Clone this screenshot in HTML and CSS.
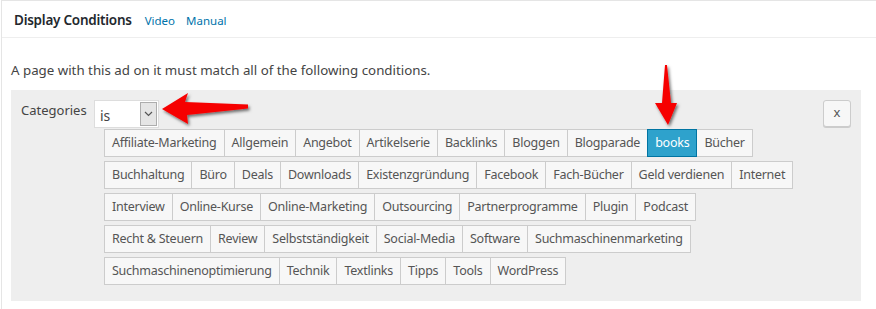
FILE: index.html
```html
<!doctype html>
<html>
<head>
<meta charset="utf-8">
<title>Display Conditions</title>
<link rel="stylesheet" href="styles.css">
</head>
<body>
<div class="postbox">
  <div class="hndle">
    <h2>Display Conditions</h2>
    <a href="#">Video</a>
    <a href="#">Manual</a>
  </div>
  <div class="inside">
    <p class="intro">A page with this ad on it must match all of the following conditions.</p>
    <div class="condition">
      <div class="label">Categories</div>
      <div class="values">
        <div class="select">
          <span>is</span>
          <span class="caret">
            <svg width="9" height="6" viewBox="0 0 9 6"><path d="M1 1l3.5 3.5L8 1" fill="none" stroke="#555" stroke-width="1.2"/></svg>
          </span>
        </div>
        <div class="tags">
          <div class="row">
            <span class="tag">Affiliate-Marketing</span><span class="tag">Allgemein</span><span class="tag">Angebot</span><span class="tag">Artikelserie</span><span class="tag">Backlinks</span><span class="tag">Bloggen</span><span class="tag">Blogparade</span><span class="tag active">books</span><span class="tag">Bücher</span>
          </div>
          <div class="row">
            <span class="tag">Buchhaltung</span><span class="tag">Büro</span><span class="tag">Deals</span><span class="tag">Downloads</span><span class="tag">Existenzgründung</span><span class="tag">Facebook</span><span class="tag">Fach-Bücher</span><span class="tag">Geld verdienen</span><span class="tag">Internet</span>
          </div>
          <div class="row">
            <span class="tag">Interview</span><span class="tag">Online-Kurse</span><span class="tag">Online-Marketing</span><span class="tag">Outsourcing</span><span class="tag">Partnerprogramme</span><span class="tag">Plugin</span><span class="tag">Podcast</span>
          </div>
          <div class="row">
            <span class="tag">Recht &amp; Steuern</span><span class="tag">Review</span><span class="tag">Selbstständigkeit</span><span class="tag">Social-Media</span><span class="tag">Software</span><span class="tag">Suchmaschinenmarketing</span>
          </div>
          <div class="row">
            <span class="tag">Suchmaschinenoptimierung</span><span class="tag">Technik</span><span class="tag">Textlinks</span><span class="tag">Tipps</span><span class="tag">Tools</span><span class="tag">WordPress</span>
          </div>
        </div>
      </div>
      <button class="remove">x</button>
    </div>
  </div>
</div>

<!-- annotation arrows over the screenshot -->
<svg class="arrows" width="876" height="309" viewBox="0 0 876 309">
  <defs>
    <filter id="shadow" x="-20%" y="-20%" width="150%" height="150%">
      <feDropShadow dx="1.5" dy="2" stdDeviation="1.5" flood-color="#000" flood-opacity="0.55"/>
    </filter>
  </defs>
  <g fill="#f60000" filter="url(#shadow)">
    <polygon points="162,109 188,93 185,102 248,104.5 248,108.5 187,115 188,124"/>
    <polygon points="665,65 667,65 671,103 677,103 668,125 655,103 662,103"/>
  </g>
</svg>
</body>
</html>
```

FILE: styles.css
```css
html, body {
  margin: 0;
  padding: 0;
}
body {
  position: relative;
  overflow: hidden;
  background: #fff;
  font-family: "Noto Sans", "Open Sans", Arial, sans-serif;
  font-size: 13px;
  color: #444;
}
.postbox {
  margin: 0 -10px 0 1px;
  border: 1px solid #e5e5e5;
  border-bottom: 0;
  min-height: 308px;
}
.hndle {
  display: flex;
  align-items: baseline;
  gap: 11px;
  height: 36px;
  padding: 0 12px;
  border-bottom: 1px solid #eee;
}
.hndle h2 {
  margin: 0;
  padding-top: 10px;
  font-size: 13.5px;
  font-weight: 600;
  letter-spacing: -0.25px;
  color: #23282d;
}
.hndle a {
  font-size: 11.5px;
  color: #0073aa;
  text-decoration: none;
}
.hndle h2 + a {
  margin-left: 2px;
}
.inside {
  padding: 0 24px 0 9px;
}
.intro {
  margin: 0;
  padding: 22px 0 10px;
  line-height: 20px;
  font-size: 13.3px;
}
.condition {
  display: flex;
  align-items: flex-start;
  background: #eee;
  padding: 10px 10px 12px 10px;
}
.label {
  flex-shrink: 0;
  width: 73px;
  padding-top: 1px;
  color: #444;
}
.values {
  flex: 1;
}
.select {
  display: flex;
  justify-content: space-between;
  width: 63px;
  height: 26px;
  border: 1px solid #ddd;
  background: #fff;
  font-size: 14px;
}
.select span:first-child {
  padding: 5px 0 0 5px;
}
.caret {
  display: flex;
  align-items: center;
  justify-content: center;
  width: 15px;
  margin: 1px 1px 1px 0;
  background: #e5e5e5;
  border: 1px solid #adadad;
}
.tags {
  padding-left: 10px;
  margin-top: 1px;
}
.row {
  display: flex;
  margin-bottom: 4px;
}
.tag {
  display: block;
  height: 26px;
  line-height: 26px;
  padding: 0 7px;
  border: 1px solid #ccc;
  background: #f7f7f7;
  color: #555;
  font-size: 12.5px;
  letter-spacing: -0.25px;
  white-space: nowrap;
}
.tag + .tag {
  margin-left: -1px;
}
.tag.active {
  background: #2ea2cc;
  border-color: #0074a2;
  color: #fff;
  position: relative;
}
.remove {
  flex-shrink: 0;
  width: 28px;
  height: 27px;
  padding: 0 0 3px;
  border: 1px solid #ccc;
  border-radius: 3px;
  background: #f7f7f7;
  box-shadow: 0 1px 0 #ccc;
  font-family: inherit;
  font-size: 13px;
  color: #555;
}
.arrows {
  position: absolute;
  left: 0;
  top: 0;
  pointer-events: none;
}
```
